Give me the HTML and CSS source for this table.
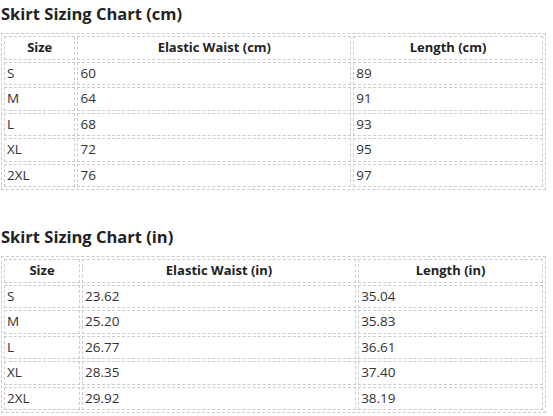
FILE: index.html
```html
<!DOCTYPE html>
<html>
<head>
<meta charset="utf-8">
<link rel="stylesheet" href="styles.css">
</head>
<body>
<div class="page">
  <h2 class="title">Skirt Sizing Chart (cm)</h2>
  <table class="chart">
    <thead>
      <tr><th>Size</th><th>Elastic Waist (cm)</th><th>Length (cm)</th></tr>
    </thead>
    <tbody>
      <tr><td>S</td><td>60</td><td>89</td></tr>
      <tr><td>M</td><td>64</td><td>91</td></tr>
      <tr><td>L</td><td>68</td><td>93</td></tr>
      <tr><td>XL</td><td>72</td><td>95</td></tr>
      <tr><td>2XL</td><td>76</td><td>97</td></tr>
    </tbody>
  </table>
  <h2 class="title">Skirt Sizing Chart (in)</h2>
  <table class="chart">
    <thead>
      <tr><th>Size</th><th>Elastic Waist (in)</th><th>Length (in)</th></tr>
    </thead>
    <tbody>
      <tr><td>S</td><td>23.62</td><td>35.04</td></tr>
      <tr><td>M</td><td>25.20</td><td>35.83</td></tr>
      <tr><td>L</td><td>26.77</td><td>36.61</td></tr>
      <tr><td>XL</td><td>28.35</td><td>37.40</td></tr>
      <tr><td>2XL</td><td>29.92</td><td>38.19</td></tr>
    </tbody>
  </table>
</div>
</body>
</html>
```
FILE: styles.css
```css
html, body {
  margin: 0;
  padding: 0;
  background: #fff;
}
body {
  font-family: "Open Sans", "Liberation Sans", sans-serif;
  color: #333;
}
.page {
  padding: 0 1px;
  width: 545px;
}
.title {
  font-size: 16.5px;
  line-height: 22px;
  font-weight: 700;
  margin: 3px 0 8px;
  color: #222;
}
.chart {
  width: 545px;
  border-collapse: separate;
  border-spacing: 2px;
  border: 1px dashed #ccc;
  margin-bottom: 36px;
  font-size: 13.5px;
}
.chart th, .chart td {
  border: 1px dashed #ccc;
  padding: 1px 2px;
  line-height: 19.5px;
  height: 19.5px;
}
.chart th {
  font-weight: 700;
  font-size: 13px;
  text-align: center;
  color: #222;
}
.chart td {
  text-align: left;
}
```
